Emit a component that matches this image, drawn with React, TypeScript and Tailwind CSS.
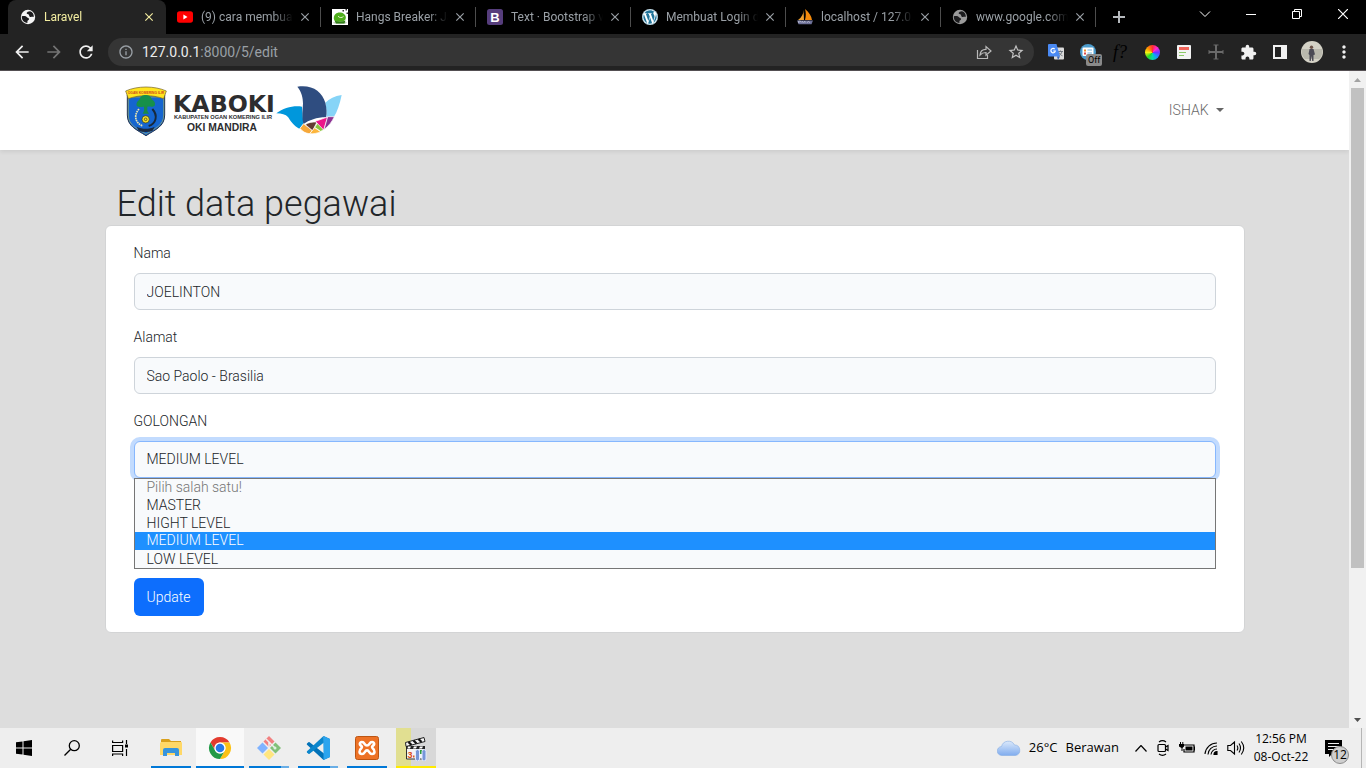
import { useState, type ReactNode } from "react";
import { FaWordpress } from "react-icons/fa";
import {
  MdArrowBack,
  MdArrowForward,
  MdClose,
  MdExtension,
  MdInfoOutline,
  MdMoreVert,
  MdRefresh,
  MdStarBorder,
} from "react-icons/md";

const LEVELS = ["MASTER", "HIGHT LEVEL", "MEDIUM LEVEL", "LOW LEVEL"];

/* ---------- Favicons ---------- */

function GlobeIcon({ color }: { color: string }) {
  return (
    <svg viewBox="0 0 16 16" className="size-4">
      <circle cx="8" cy="8" r="7.2" fill={color} />
      <path
        d="M1.800 7.200C4.500 6.700 6 7 7 8.200c.6.900 2.200.6 2 2-.2 1.100-1.600 1.100-1.600 2.200v1.500C4 13.800 1.500 10.800 1.800 7.200ZM10 2.200c-1.800.2-3 .8-3.400 1.800.2 1.200 1.500.9 2.300 1.700.6.800 0 1.800 1.300 2.200 1.200.3 2.100-.4 3.600.1C14 5 12.500 2.700 10 2.200Z"
        fill="#1c1c1e"
      />
    </svg>
  );
}

function YoutubeIcon() {
  return (
    <svg viewBox="0 0 16 16" className="size-4">
      <rect y="2.300" width="16" height="11.400" rx="2.600" fill="#f00" />
      <path d="M6.400 5.600v4.800L10.500 8Z" fill="#fff" />
    </svg>
  );
}

function FrogIcon() {
  return (
    <svg viewBox="0 0 16 16" className="size-4">
      <path fill="#fff" d="M0 0h16v16H0z" />
      <ellipse cx="8" cy="13.800" rx="7" ry="1.500" fill="#c9cfc4" />
      <path d="M1.800 9C1.800 5.500 4.500 3.400 7.500 3.400c3.600 0 6.300 2 6.300 5.200 0 3-2.300 4.200-6.300 4.200S1.800 11.800 1.800 9Z" fill="#4fae1c" />
      <path d="M2.500 11.500c3 1.500 8 1.500 11 0l-1 3H4Z" fill="#2e7d14" />
      <path d="M6 7.200c1.500 1.800 4 1.800 5.500.2" stroke="#e4f7cf" strokeWidth="1" fill="none" />
      <path d="M10.500 1h1.500v1.500h-1.500zM13.500 0H15v1.500h-1.500zM14.500 3.500H16V5h-1.500z" fill="#333" />
    </svg>
  );
}

function BootstrapIcon() {
  return (
    <svg viewBox="0 0 16 16" className="size-4">
      <rect width="16" height="16" rx="2.500" fill="#563d7c" />
      <text x="8" y="12.800" fontSize="13" fontWeight="700" textAnchor="middle" fill="#fff" fontFamily="Liberation Sans, sans-serif">
        B
      </text>
    </svg>
  );
}

function WordpressIcon() {
  return (
    <span className="grid size-4 place-items-center rounded-full bg-white">
      <FaWordpress className="size-4 text-[#21759b]" />
    </span>
  );
}

function PmaIcon() {
  return (
    <svg viewBox="0 0 16 16" className="size-4">
      <path d="M6.500 1C6.600 5 4.500 8.500 1 11h6Z" fill="#f0a030" />
      <path d="M8 0c4 3 6.500 7 7 11H8c1.200-4 1-8 0-11Z" fill="#f58a0b" />
      <path d="M0 11.500h16l-1.500 3.700H1.500Z" fill="#6c6f96" />
      <path d="M1.500 14v-2h2v1h-2M5 14v-2l1.500 1.500L8 12v2M10 14l1.500-2 1.500 2" fill="none" stroke="#c7c9dc" strokeWidth=".6" />
    </svg>
  );
}

const TABS: { title: string; icon: ReactNode; active?: boolean }[] = [
  { title: "Laravel", icon: <GlobeIcon color="#f5f5f5" />, active: true },
  { title: "(9) cara membuat", icon: <YoutubeIcon /> },
  { title: "Hangs Breaker: Ja", icon: <FrogIcon /> },
  { title: "Text · Bootstrap v", icon: <BootstrapIcon /> },
  { title: "Membuat Login d", icon: <WordpressIcon /> },
  { title: "localhost / 127.0.0", icon: <PmaIcon /> },
  { title: "www.google.com", icon: <GlobeIcon color="#9a9a9a" /> },
];

/* ---------- Browser chrome ---------- */

function TabStrip() {
  return (
    <div className="flex h-[34px] bg-black pl-2">
      <div className="flex min-w-0 flex-1">
        {TABS.map((tab) => (
          <div
            key={tab.title}
            className={
              tab.active
                ? "flex h-[34px] w-[158px] shrink-0 items-center rounded-t-lg bg-[#232323] pr-[9px] pl-3 text-[#f3eda0]"
                : "flex h-[34px] w-[155px] min-w-0 items-center pl-[11px] text-[#9aa0a6]"
            }
          >
            {tab.icon}
            <span className="ml-2 min-w-0 flex-1 overflow-hidden whitespace-nowrap [mask-image:linear-gradient(to_right,#000_78%,transparent_100%)]">
              {tab.title}
            </span>
            <button aria-label={`Close ${tab.title}`} className="ml-1 grid size-4 place-items-center">
              <MdClose className="size-[14px]" />
            </button>
            {!tab.active && <span className="ml-[7px] h-5 w-px bg-[#4d4d4d]" />}
          </div>
        ))}
        <button aria-label="New tab" className="ml-[13px] grid w-5 shrink-0 place-items-center text-[#b5b9bd]">
          <svg viewBox="0 0 14 14" className="size-[14px]" stroke="currentColor" strokeWidth="2">
            <path d="M7 1v12M1 7h12" />
          </svg>
        </button>
      </div>
      <div className="flex h-7 shrink-0 text-white">
        <button aria-label="Search tabs" className="grid w-[46px] place-items-center">
          <svg viewBox="0 0 12 12" className="size-3" fill="none" stroke="currentColor"><path d="m1 3.500 5 5 5-5" /></svg>
        </button>
        <button aria-label="Minimize" className="grid w-[46px] place-items-center">
          <svg viewBox="0 0 10 10" className="size-[10px]" stroke="currentColor"><path d="M0 5.500h10" /></svg>
        </button>
        <button aria-label="Restore" className="grid w-[46px] place-items-center">
          <svg viewBox="0 0 10 10" className="size-[10px]" fill="none" stroke="currentColor"><path d="M.5 2.500h7v7h-7zM2.500 2.500v-2h7v7h-2" /></svg>
        </button>
        <button aria-label="Close window" className="grid w-[46px] place-items-center">
          <svg viewBox="0 0 10 10" className="size-[10px]" stroke="currentColor" strokeWidth="1.200"><path d="m0 0 10 10M10 0 0 10" /></svg>
        </button>
      </div>
    </div>
  );
}

const EXTENSIONS: { name: string; icon: ReactNode }[] = [
  {
    name: "Translate",
    icon: (
      <svg viewBox="0 0 16 16" className="size-4">
        <rect x="6" y="3.500" width="10" height="12" rx="1" fill="#dcdcdc" />
        <path d="M10 7.500h5M12.500 6.500v1M14 7.500c-.5 2-2 3.500-3.500 4.300M11 8.500c.6 1.500 2 2.800 3.500 3.300" stroke="#707780" fill="none" />
        <path d="M1 0h7.500L12 12.500H1a1 1 0 0 1-1-1V1a1 1 0 0 1 1-1Z" fill="#4a8af4" />
        <path d="M9 12.500h3L10 16Z" fill="#3563b8" />
        <path d="M6.700 5.100A2.200 2.200 0 1 0 7.300 7H5.200" fill="none" stroke="#fff" strokeWidth="1.200" />
      </svg>
    ),
  },
  {
    name: "Page tool, off",
    icon: (
      <span className="relative size-4">
        <svg viewBox="0 0 16 16" className="size-4">
          <circle cx="8" cy="8" r="8" fill="#4b9ccd" />
          <rect x="2.500" y="3.500" width="11" height="8.500" rx="1" fill="#fff" />
          <path d="M4 5.500h2v2H4z" fill="#f08b27" />
          <path d="M4 8.500h2v2H4z" fill="#db4b4b" />
          <path d="M7.500 6h4.500M7.500 9h4.500" stroke="#6eb3e0" />
        </svg>
        <span className="absolute top-[10px] left-[6px] rounded-xs bg-[#8a8a8a] px-[2px] text-[9px] leading-3 text-black">Off</span>
      </span>
    ),
  },
  {
    name: "Font finder",
    icon: <span className="font-['Liberation_Serif',serif] text-[18px] leading-4 text-black italic">f?</span>,
  },
  {
    name: "Color picker",
    icon: (
      <span className="size-[15px] rounded-full bg-[conic-gradient(#ff3131,#ff27d4,#6b37ff,#1698ff,#08d8a4,#26d926,#f5ef11,#ff8c00,#ff3131)]" />
    ),
  },
  {
    name: "Notes",
    icon: (
      <svg viewBox="0 0 14 14" className="size-[14px]">
        <rect width="14" height="14" rx="1" fill="#f3f3f3" />
        <path d="M2 2h10v3H2z" fill="#f0645a" />
        <path d="M2 7.500h7" stroke="#8cc968" />
        <path d="M2 10.500h5" stroke="#8cc968" />
      </svg>
    ),
  },
  {
    name: "Ruler",
    icon: (
      <svg viewBox="0 0 16 16" className="size-4" stroke="#6a6a6a" fill="none">
        <path d="M7.500 1v14M8.500 1v14M1 7.500h14M1 8.500h14M5.500 1h5M5.500 15h5M1 6v4M15 6v4" />
      </svg>
    ),
  },
  { name: "Extensions", icon: <MdExtension className="size-[17px] text-[#f1f1f1]" /> },
  {
    name: "Side panel",
    icon: (
      <svg viewBox="0 0 14 14" className="size-[14px]">
        <path d="M0 0h14v14H0ZM2 2v10h6V2Z" fill="#f1f1f1" fillRule="evenodd" />
      </svg>
    ),
  },
  {
    name: "Profile",
    icon: (
      <svg viewBox="0 0 22 22" className="size-[22px]">
        <circle cx="11" cy="11" r="11" fill="#d4d2c6" />
        <path d="M1 8h20c1 4-.5 8-3 10H4C1 15 0 12 1 8Z" fill="#b9b8ad" />
        <path d="M8.500 8h4l1.500 5.500-1.500.5V20h-1.300l-.7-5-.7 5H8.500v-6L7.500 13Z" fill="#4b4a55" />
        <circle cx="10.500" cy="6.300" r="1.700" fill="#6d5348" />
      </svg>
    ),
  },
  { name: "Menu", icon: <MdMoreVert className="size-5 text-[#f1f1f1]" /> },
];

function Toolbar() {
  return (
    <div className="flex h-[37px] items-center border-b border-[#555053] bg-[#232323] pl-[6px]">
      <button aria-label="Back" className="grid w-8 place-items-center text-[#f1f1f1]"><MdArrowBack className="size-5" /></button>
      <button aria-label="Forward" className="grid w-8 place-items-center text-[#747474]"><MdArrowForward className="size-5" /></button>
      <button aria-label="Reload" className="grid w-8 place-items-center text-[#f1f1f1]"><MdRefresh className="size-5" /></button>
      <div className="ml-[6px] flex h-7 min-w-0 flex-1 items-center rounded-full bg-[#353535] pr-2 pl-[10px] text-[14px]">
        <MdInfoOutline className="size-4 shrink-0 text-[#9aa0a6]" />
        <a href="http://127.0.0.1:8000/5/edit" className="ml-2 flex-1 text-[#9aa0a6]">
          <span className="text-[#ececec]">127.0.0.1</span>:8000/5/edit
        </a>
        <button aria-label="Share" className="grid w-5 place-items-center text-[#b9b9b9]">
          <svg viewBox="0 0 16 16" className="size-4" fill="none" stroke="currentColor" strokeWidth="1.200">
            <path d="M1.500 6v8.500h10V11" />
            <path d="M4 11c.3-3.700 2.300-5.500 6-5.600V2.500L15 7l-5 4.300V8.500C7.500 8.500 5.600 9.200 4 11Z" />
          </svg>
        </button>
        <button aria-label="Bookmark" className="ml-3 grid w-5 place-items-center text-[#c2c2c2]"><MdStarBorder className="size-[18px]" /></button>
      </div>
      <div className="ml-[6px] flex shrink-0 pr-[6px]">
        {EXTENSIONS.map((ext) => (
          <button key={ext.name} aria-label={ext.name} className="grid h-8 w-8 place-items-center">
            {ext.icon}
          </button>
        ))}
      </div>
    </div>
  );
}

/* ---------- Page ---------- */

function Logo() {
  return (
    <svg viewBox="42 30 660 168" className="h-14 w-[220px]" role="img" aria-label="KABOKI">
      <path d="M52 66h112v60c0 34-28 44-56 62-28-18-56-28-56-62Z" fill="#1565cf" stroke="#22304a" strokeWidth="3" />
      <path d="M55 72h106v54c0 31-26 40-53 57-27-17-53-26-53-57Z" fill="none" stroke="#c9c94a" strokeWidth="1.500" />
      <path d="M47 54C82 38 134 38 169 54l-8 23c-34-12-72-12-106 0Z" fill="#ffe51f" stroke="#6d5a28" strokeWidth="2" />
      <text x="108" y="62" textAnchor="middle" fontSize="10" fontWeight="700" fill="#d0451b" fontFamily="Liberation Sans, sans-serif">OGAN KOMERING ILIR</text>
      <path d="M80 98c-2-10 4-14 8-18 4-12 12-14 19-14s15 2 19 14c8 3 11 11 8 18-8 6-14 2-20 3-6-2-8-2-14 0-7 2-14 2-20-3Z" fill="#16904b" />
      <path d="M102 98h10v16l5 8H98l4-8Z" fill="#1b8a48" />
      <path d="M87 108c-18 20-10 44 12 51" fill="none" stroke="#e6e3b0" strokeWidth="5" strokeDasharray="5 2" />
      <path d="M127 108c18 20 11 44-11 51" fill="none" stroke="#17283a" strokeWidth="6" />
      <circle cx="107" cy="139" r="11" fill="#f5df2b" stroke="#2c341d" strokeWidth="2" />
      <circle cx="107" cy="139" r="4" fill="#f5df2b" stroke="#2c341d" strokeWidth="2" />
      <path d="M80 161c18 8 36 8 54 0l-6 12c-13 5-29 5-42 0Z" fill="#1c2a41" />
      <g fill="#2d2d2f" fontWeight="700">
        <text x="189" y="117" fontSize="71" fontFamily="DejaVu Sans, sans-serif">KABOKI</text>
        <text x="192" y="139" fontSize="17" fontFamily="Liberation Sans, sans-serif">KABUPATEN OGAN KOMERING ILIR</text>
        <text x="231" y="175" fontSize="31" fontFamily="Liberation Sans, sans-serif">OKI MANDIRA</text>
      </g>
      <path d="M499 121c22-17 52-24 77-20l4 51-12 15c-17-9-26-22-34-35-7-8-19-10-35-11Z" fill="#0097dc" />
      <path d="M695 66c-6 28-13 50-24 67l-22-1c2-21-2-34-3-43 12-12 28-20 49-23Z" fill="#86d4f7" />
      <path d="M562 41c44-7 74 14 84 48 4 16 5 33 2 44-28 0-51 8-68 21-5-23-2-44-1-62 0-18-4-35-17-51Z" fill="#2f4d80" />
      <g stroke="#fff" strokeWidth="2">
        <path d="m570 166 11-14 26 21-9 9c-11-1-21-6-28-16Z" fill="#f6a83a" />
        <path d="M586 155c8-7 22-9 35-8l-13 26Z" fill="#643c32" />
        <path d="M599 182 614 164l18 12c-10 5-21 7-33 6Z" fill="#fcb53c" />
        <path d="m614 163 10-14 17 21-9 5Z" fill="#8bc63f" />
        <path d="m616 145 37-13-12 39Z" fill="#ec1589" />
        <path d="M653 131h20c-6 14-17 28-31 39Z" fill="#8c3292" />
      </g>
    </svg>
  );
}

const FIELD =
  "mt-2 block h-[37px] w-full appearance-none rounded-md border bg-[#f8fafc] px-3 text-[14px] text-[#212529] outline-none";

function EditForm() {
  const [name, setName] = useState("JOELINTON");
  const [address, setAddress] = useState("Sao Paolo - Brasilia");
  const [level, setLevel] = useState("MEDIUM LEVEL");

  return (
    <form
      onSubmit={(event) => event.preventDefault()}
      className="rounded-md border border-[#d3d4d5] bg-white px-7 py-4"
    >
      <div className="mb-4">
        <label htmlFor="nama" className="block leading-[23px]">Nama</label>
        <input id="nama" value={name} onChange={(e) => setName(e.target.value)} className={`${FIELD} border-[#ced4da]`} />
      </div>
      <div className="mb-4">
        <label htmlFor="alamat" className="block leading-[23px]">Alamat</label>
        <input id="alamat" value={address} onChange={(e) => setAddress(e.target.value)} className={`${FIELD} border-[#ced4da]`} />
      </div>
      <div className="relative mb-[100px]">
        <label htmlFor="golongan" className="block leading-[23px]">GOLONGAN</label>
        <select
          id="golongan"
          value={level}
          onChange={(e) => setLevel(e.target.value)}
          className={`${FIELD} border-[#86b7fe] ring-4 ring-[#c2dbfe]`}
        >
          {LEVELS.map((item) => (
            <option key={item}>{item}</option>
          ))}
        </select>
        <ul role="listbox" aria-label="GOLONGAN" className="absolute inset-x-0 top-full border border-[#767676] bg-[#f8fafc]">
          <li role="option" aria-selected={false} aria-disabled className="h-[17px] px-3 leading-[17px] text-[#757575]">
            Pilih salah satu!
          </li>
          {LEVELS.map((item) => (
            <li
              key={item}
              role="option"
              aria-selected={item === level}
              onClick={() => setLevel(item)}
              className={
                item === level
                  ? "h-[18px] bg-[#1e90ff] px-3 leading-[17px] text-white"
                  : "h-[18px] px-3 leading-[18px]"
              }
            >
              {item}
            </li>
          ))}
        </ul>
      </div>
      <button type="submit" className="h-[38px] rounded-md bg-[#0d6efd] px-[13px] text-white">Update</button>
    </form>
  );
}

function Page() {
  return (
    <main className="flex min-h-0 flex-1 bg-[#dddddd] font-['Roboto',sans-serif] text-[14px] font-light text-[#212529]">
      <div className="min-w-0 flex-1">
        <nav className="bg-white shadow-[0_2px_4px_rgba(0,0,0,0.075)]">
          <div className="mx-auto flex h-[79px] max-w-[1140px] items-center justify-between pr-[21px] pl-[19px]">
            <a href="#home"><Logo /></a>
            <button className="flex items-center gap-[7px] text-[#6a6a6a]">
              ISHAK
              <svg viewBox="0 0 8 4" className="mb-[2px] h-1 w-2" fill="#666"><path d="M0 0h8L4 4Z" /></svg>
            </button>
          </div>
        </nav>
        <div className="mx-auto max-w-[1140px] pt-[33px]">
          <h1 className="pl-3 text-[36px] leading-[42px]">Edit data pegawai</h1>
          <EditForm />
        </div>
      </div>
      <div aria-hidden="true" className="flex w-[17px] shrink-0 flex-col items-center bg-[#f1f1f1]">
        <span className="grid h-[17px] place-items-center">
          <svg viewBox="0 0 7 4" className="h-1 w-[7px]" fill="#a3a3a3"><path d="M0 4h7L3.500 0Z" /></svg>
        </span>
        <div className="min-h-0 w-[13px] flex-1">
          <div className="h-[77%] bg-[#c1c1c1]" />
        </div>
        <span className="grid h-[17px] place-items-center">
          <svg viewBox="0 0 7 4" className="h-1 w-[7px]" fill="#505050"><path d="M0 0h7L3.500 4Z" /></svg>
        </span>
      </div>
    </main>
  );
}

/* ---------- Taskbar ---------- */

const APPS: { name: string; icon: ReactNode; cell: string; bars: string[] }[] = [
  {
    name: "File Explorer",
    cell: "px-1",
    bars: ["flex-1 bg-[#0078d7]"],
    icon: (
      <svg viewBox="0 0 22 20" className="h-5 w-[22px]">
        <path d="M1 2a1 1 0 0 1 1-1h7l2 2h10v6H1Z" fill="#d9a01c" />
        <path d="M1 4h20a1 1 0 0 1 1 1v12H0V5Z" fill="#ffd867" />
        <path d="M3 18v-6a2 2 0 0 1 2-2h12a2 2 0 0 1 2 2v6h-4v-3H7v3Z" fill="#3794dc" />
      </svg>
    ),
  },
  {
    name: "Chrome",
    cell: "bg-[#f9f9f9]",
    bars: ["flex-1 bg-[#0078d7]"],
    icon: (
      <svg viewBox="0 0 24 24" className="size-6">
        <circle cx="12" cy="12" r="11" fill="#fff" />
        <path d="M2.470 6.500A11 11 0 0 1 21.530 6.500H12A5.500 5.500 0 0 0 7.240 14.750Z" fill="#e33b2e" />
        <path d="M21.530 6.500A11 11 0 0 1 12 23l4.760-8.250A5.500 5.500 0 0 0 12 6.500Z" fill="#fbc116" />
        <path d="M12 23A11 11 0 0 1 2.470 6.500l4.770 8.250a5.500 5.500 0 0 0 9.520 0Z" fill="#229a47" />
        <circle cx="12" cy="12" r="5.500" fill="#fff" />
        <circle cx="12" cy="12" r="4.300" fill="#2979e8" />
      </svg>
    ),
  },
  {
    name: "Git Bash",
    cell: "px-1",
    bars: ["flex-1 bg-[#0078d7]", "w-2 bg-[#69aee6]"],
    icon: (
      <svg viewBox="0 0 24 24" className="size-6">
        <path d="m12 0 5.500 5.500L12 11 6.500 5.500Z" fill="#f28080" />
        <path d="m5.500 6.500 5.500 5.500-5.500 5.500L0 12Z" fill="#80b3ff" />
        <path d="m18.500 6.500 5.500 5.500-5.500 5.500L13 12Z" fill="#80c078" />
        <path d="m12 13 5.500 5.500L12 24l-5.500-5.500Z" fill="#ffe680" />
        <path d="m9 3 3 3v5M12 6l6 6" fill="none" stroke="#eee" strokeWidth="1.500" />
        <circle cx="18" cy="12" r="1.500" fill="#dff0df" />
      </svg>
    ),
  },
  {
    name: "Visual Studio Code",
    cell: "px-1",
    bars: ["flex-1 bg-[#0078d7]", "w-2 bg-[#69aee6]"],
    icon: (
      <svg viewBox="0 0 24 24" className="size-6">
        <path d="M17.500 0 24 3v18l-6.500 3L1 8.800a1 1 0 0 1 0-1.300l1.400-1.300a1 1 0 0 1 1.200 0L18 17.500Z" fill="#0272b8" />
        <path d="M17.500 0 1 15.200a1 1 0 0 0 0 1.300l1.400 1.300a1 1 0 0 0 1.200 0L18 6.500Z" fill="#0b86cc" />
        <path d="M17.500 0 24 3v18l-6.500 3Z" fill="#2ba4ee" />
      </svg>
    ),
  },
  {
    name: "XAMPP",
    cell: "px-1",
    bars: ["flex-1 bg-[#0078d7]"],
    icon: (
      <svg viewBox="0 0 24 24" className="size-6">
        <rect x=".5" y=".5" width="23" height="23" rx="2" fill="#ed7226" stroke="#bc5513" />
        <path
          d="M8 6.200C5 5.200 3.800 8.200 6.200 9.800c1 .8 1 1.200.3 2.200-3 2.600-2.500 6 .5 6 3 0 2.500-3.600 5-3.600s2 3.600 5 3.600 3.500-3.400.5-6c-.7-1-.7-1.400.3-2.200 2.400-1.600 1.200-4.600-1.800-3.600-1.500.7-1.800 3.300-4 3.300s-2.500-2.600-4-3.300Z"
          fill="none"
          stroke="#fff"
          strokeWidth="2.600"
          strokeLinejoin="round"
        />
      </svg>
    ),
  },
  {
    name: "Screen recorder",
    cell: "px-1",
    bars: ["flex-1 bg-[#ffeb00]"],
    icon: (
      <svg viewBox="0 0 24 24" className="size-6">
        <path d="M1.500 5.500 20 .5l1 4-19 5Z" fill="#f5f5f5" stroke="#222" />
        <path d="m4.500 5 3 3M9.500 3.500l3 3M14.500 2l3 3" stroke="#111" strokeWidth="2.200" />
        <path d="M2.500 9.500h18V22h-18Z" fill="#f5f5f5" stroke="#333" />
        <path d="M2 9h19v3H2Z" fill="#222" />
        <path d="M4 9.500h3l-1 2H3.500zM10 9.500h3l-1 2H9zM16 9.500h3l-1 2h-3z" fill="#fff" />
        <text x="3.500" y="20.500" fontSize="9" fontWeight="700" fill="#dd4a14" fontFamily="Liberation Sans, sans-serif">3</text>
        <path d="M9 18.500h1.500v2H9z" fill="#de5a21" />
        <path d="M16 13h4v4h-4z" fill="#2c9c3c" />
        <rect x="11.500" y="12.500" width="4" height="11.500" rx="2" fill="#7795d8" stroke="#e4edff" />
        <rect x="18" y="12.500" width="4" height="11.500" rx="2" fill="#7795d8" stroke="#e4edff" />
      </svg>
    ),
  },
];

function Taskbar() {
  return (
    <footer className="flex h-10 shrink-0 bg-[#eeeeee] font-['Open_Sans','Noto_Sans',sans-serif] text-black">
      <button aria-label="Start" className="grid w-12 place-items-center">
        <svg viewBox="0 0 16 16" className="size-4"><path d="M0 2.300 6.500 1.400v6.100H0ZM7.500 1.200 16 0v7.500H7.500ZM0 8.500h6.500v6.100L0 13.700ZM7.500 8.500H16V16l-8.500-1.200Z" /></svg>
      </button>
      <button aria-label="Search" className="grid w-12 place-items-center">
        <svg viewBox="0 0 16 16" className="size-4" fill="none" stroke="#000" strokeWidth="1.300"><circle cx="10.300" cy="5.700" r="5" /><path d="M6.700 9.300.5 15.500" /></svg>
      </button>
      <button aria-label="Task view" className="mr-[3px] grid w-12 place-items-center">
        <svg viewBox="0 0 16 16" className="size-4" fill="none" stroke="#000" strokeWidth="1.200"><path d="M.6.5v2h10v-2M.6 5.500h10v6H.6ZM.6 16v-2h10v2M14.500 0v4M14.500 9v7" /><path d="M13 4.500h3v3h-3z" fill="#000" stroke="none" /></svg>
      </button>
      <div className="flex gap-px">
        {APPS.map((app) => (
          <button key={app.name} aria-label={app.name} className={`flex w-12 flex-col ${app.cell}`}>
            <span
              className={
                app.name === "Screen recorder"
                  ? "grid w-full flex-1 place-items-center bg-[linear-gradient(to_right,#e1df91_38%,#d8d8d8_38%)] pt-1"
                  : "grid w-full flex-1 place-items-center pt-[2px]"
              }
            >
              {app.icon}
            </span>
            <span className="flex h-[2px] w-full">
              {app.bars.map((bar) => (
                <span key={bar} className={bar} />
              ))}
            </span>
          </button>
        ))}
      </div>
      <div className="ml-auto flex items-center">
        <button className="flex items-center text-[13px]">
          <svg viewBox="0 0 24 16" className="mr-2 h-4 w-6">
            <defs>
              <linearGradient id="cloud" x1="0" y1="0" x2="0" y2="1">
                <stop offset="0" stopColor="#dbe9fb" />
                <stop offset="1" stopColor="#80acee" />
              </linearGradient>
            </defs>
            <path d="M5 15.500a4.500 4.500 0 0 1-.5-9A7 7 0 0 1 17.500 5a5.300 5.300 0 0 1 1 10.500Z" fill="url(#cloud)" stroke="#85ace4" strokeWidth=".6" />
          </svg>
          <span>26°C</span>
          <span className="ml-2">Berawan</span>
        </button>
        <div className="ml-4 flex items-center gap-2">
          <svg viewBox="0 0 12 7" className="h-[7px] w-3" fill="none" stroke="#000" strokeWidth="1.200"><path d="m.5 6.500 5.500-6 5.500 6" /></svg>
          <svg viewBox="0 0 16 16" className="size-4" fill="none" stroke="#000" strokeWidth="1.200"><rect x="3" y="4.500" width="7.500" height="7" rx="1" /><path d="m10.500 7 2.500-1.500v5L10.500 9M4 2c2-1.500 5-1.500 7 0M4 14c2 1.500 5 1.500 7 0" /></svg>
          <svg viewBox="0 0 16 16" className="size-4"><path d="M4.500 5H15v7H5V9M15 7h1v3h-1" fill="none" stroke="#000" strokeWidth="1.200" /><path d="M6.500 6.500h7v4h-7zM0 4h5v2.500L3.500 8v3h-1V8L0 6.500ZM1 2h1v2H1zM3.300 2h1v2h-1z" /></svg>
          <svg viewBox="0 0 16 16" className="size-4" fill="none" stroke="#000" strokeWidth="1.100"><path d="M2 14A12 12 0 0 1 14 3M5 14.500A9 9 0 0 1 14 6M8 14.500a6 6 0 0 1 6-5.500" /><path d="M11 14.500a3 3 0 0 1 3-3v3Z" fill="#000" /></svg>
          <svg viewBox="0 0 18 16" className="h-4 w-[18px]" fill="none" stroke="#000" strokeWidth="1.100"><path d="M.8 5.500h2.700L7.500 2v12l-4-3.500H.8ZM10 5.500c1 1.500 1 3.500 0 5M12 3.500c2 3 2 6 0 9M14.300 1.500c3 4 3 9 0 13" /></svg>
        </div>
        <time className="ml-2 w-[56px] text-center text-[12px] leading-[18px] whitespace-nowrap">
          12:56 PM
          <br />
          08-Oct-22
        </time>
        <button aria-label="Notifications" className="relative ml-4 size-[17px]">
          <svg viewBox="0 0 17 17" className="size-[17px]"><path d="M0 0h17v14H7l-3 3v-3H0Z" /><path d="M3 3.500h11M3 6.500h11M3 9.500h7" stroke="#eee" /></svg>
          <span className="absolute top-[6px] left-[6px] grid size-[18px] place-items-center rounded-full border border-[#8c8c8c] bg-[#cfcfcf] text-[12px] leading-none">12</span>
        </button>
        <span className="mr-1 ml-[19px] h-10 w-px bg-[#b5b5b5]" />
      </div>
    </footer>
  );
}

export default function App() {
  return (
    <div className="flex h-screen flex-col overflow-hidden text-[12px]">
      <header className="shrink-0 font-['Roboto','Noto_Sans',sans-serif]">
        <TabStrip />
        <Toolbar />
      </header>
      <Page />
      <Taskbar />
    </div>
  );
}
